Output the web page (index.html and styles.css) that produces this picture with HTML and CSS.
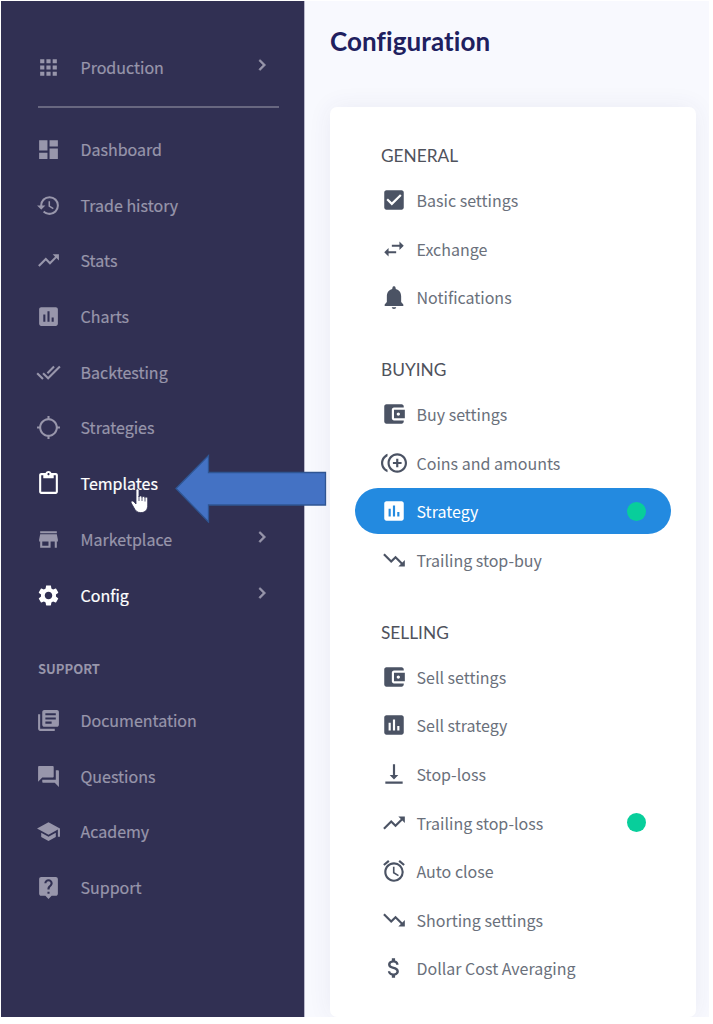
FILE: index.html
```html
<!DOCTYPE html>
<html lang="en">
<head>
<meta charset="utf-8">
<title>Configuration</title>
<link rel="stylesheet" href="styles.css">
</head>
<body>
<svg class="sprite" aria-hidden="true">
  <symbol id="apps" viewBox="0 0 24 24"><path d="M4 8h4V4H4v4zm6 12h4v-4h-4v4zm-6 0h4v-4H4v4zm0-6h4v-4H4v4zm6 0h4v-4h-4v4zm6-10v4h4V4h-4zm-6 4h4V4h-4v4zm6 6h4v-4h-4v4zm0 6h4v-4h-4v4z"/></symbol>
  <symbol id="dashboard" viewBox="0 0 24 24"><path d="M3 13h8V3H3v10zm0 8h8v-6H3v6zm10 0h8V11h-8v10zm0-18v6h8V3h-8z"/></symbol>
  <symbol id="history" viewBox="0 0 24 24"><path d="M13 3a9 9 0 0 0-9 9H1l3.89 3.89.07.14L9 12H6c0-3.87 3.13-7 7-7s7 3.13 7 7-3.13 7-7 7c-1.93 0-3.68-.79-4.94-2.06l-1.42 1.42A8.954 8.954 0 0 0 13 21a9 9 0 0 0 0-18zm-1 5v5l4.28 2.54.72-1.21-3.5-2.08V8H12z"/></symbol>
  <symbol id="up" viewBox="0 0 24 24"><path d="M16 6l2.29 2.29-4.88 4.88-4-4L2 16.59 3.41 18l6-6 4 4 6.3-6.29L22 12V6z"/></symbol>
  <symbol id="down" viewBox="0 0 24 24"><path d="M16 18l2.29-2.29-4.88-4.88-4 4L2 7.41 3.41 6l6 6 4-4 6.3 6.29L22 12v6z"/></symbol>
  <symbol id="chart" viewBox="0 0 24 24"><path d="M19 3H5c-1.1 0-2 .9-2 2v14c0 1.1.9 2 2 2h14c1.1 0 2-.9 2-2V5c0-1.1-.9-2-2-2zM9 17H7v-7h2v7zm4 0h-2V7h2v10zm4 0h-2v-4h2v4z"/></symbol>
  <symbol id="done" viewBox="0 0 24 24"><path d="M18 7l-1.41-1.41-6.34 6.34 1.41 1.41L18 7zm4.24-1.41L11.66 16.17 7.48 12l-1.41 1.41L11.66 19l12-12-1.42-1.41zM.41 13.41L6 19l1.41-1.41L1.83 12 .41 13.41z"/></symbol>
  <symbol id="target" viewBox="0 0 24 24"><path d="M20.94 11c-.46-4.17-3.77-7.48-7.94-7.94V1h-2v2.06C6.83 3.52 3.52 6.83 3.06 11H1v2h2.06c.46 4.17 3.77 7.48 7.94 7.94V23h2v-2.06c4.17-.46 7.48-3.77 7.94-7.94H23v-2h-2.06zM12 19c-3.87 0-7-3.13-7-7s3.13-7 7-7 7 3.13 7 7-3.13 7-7 7z"/></symbol>
  <symbol id="clipboard" viewBox="0 0 24 24"><path d="M19 2h-4.18C14.4.84 13.3 0 12 0S9.6.84 9.18 2H5c-1.1 0-2 .9-2 2v16c0 1.1.9 2 2 2h14c1.1 0 2-.9 2-2V4c0-1.1-.9-2-2-2zm-7 0c.55 0 1 .45 1 1s-.45 1-1 1-1-.45-1-1 .45-1 1-1zm7 18H5V4h2v3h10V4h2v16z"/></symbol>
  <symbol id="store" viewBox="0 0 24 24"><path d="M20 4H4v2h16V4zm1 10v-2l-1-5H4l-1 5v2h1v6h10v-6h4v6h2v-6h1zm-9 4H6v-4h6v4z"/></symbol>
  <symbol id="gear" viewBox="0 0 24 24"><path d="M19.14 12.94c.04-.3.06-.61.06-.94 0-.32-.02-.64-.07-.94l2.03-1.58c.18-.14.23-.41.12-.61l-1.92-3.32c-.12-.22-.37-.29-.59-.22l-2.39.96c-.5-.38-1.03-.7-1.62-.94l-.36-2.54c-.04-.24-.24-.41-.48-.41h-3.84c-.24 0-.43.17-.47.41l-.36 2.54c-.59.24-1.13.57-1.62.94l-2.39-.96c-.22-.08-.47 0-.59.22L2.74 8.87c-.12.21-.08.47.12.61l2.03 1.58c-.05.3-.09.63-.09.94s.02.64.07.94l-2.03 1.58c-.18.14-.23.41-.12.61l1.92 3.32c.12.22.37.29.59.22l2.39-.96c.5.38 1.03.7 1.62.94l.36 2.54c.05.24.24.41.48.41h3.84c.24 0 .44-.17.47-.41l.36-2.54c.59-.24 1.13-.56 1.62-.94l2.39.96c.22.08.47 0 .59-.22l1.92-3.32c.12-.22.07-.47-.12-.61l-2.01-1.58zM12 15.6c-1.98 0-3.6-1.62-3.6-3.6s1.62-3.6 3.6-3.6 3.6 1.62 3.6 3.6-1.62 3.6-3.6 3.6z"/></symbol>
  <symbol id="books" viewBox="0 0 24 24"><path d="M4 6H2v14c0 1.1.9 2 2 2h14v-2H4V6zm16-4H8c-1.1 0-2 .9-2 2v12c0 1.1.9 2 2 2h12c1.1 0 2-.9 2-2V4c0-1.1-.9-2-2-2zm-1 9H9V9h10v2zm-4 4H9v-2h6v2zm4-8H9V5h10v2z"/></symbol>
  <symbol id="chat" viewBox="0 0 24 24"><path d="M21 6h-2v9H6v2c0 .55.45 1 1 1h11l4 4V7c0-.55-.45-1-1-1zm-4 6V3c0-.55-.45-1-1-1H3c-.55 0-1 .45-1 1v14l4-4h10c.55 0 1-.45 1-1z"/></symbol>
  <symbol id="school" viewBox="0 0 24 24"><path d="M5 13.18v4L12 21l7-3.82v-4L12 17l-7-3.82zM12 3L1 9l11 6 9-4.91V17h2V9L12 3z"/></symbol>
  <symbol id="help" viewBox="0 0 24 24"><path d="M19 2H5c-1.11 0-2 .9-2 2v14c0 1.1.89 2 2 2h4l3 3 3-3h4c1.1 0 2-.9 2-2V4c0-1.1-.9-2-2-2zm-6 16h-2v-2h2v2zm2.07-7.75l-.9.92C13.45 11.9 13 12.5 13 14h-2v-.5c0-1.1.45-2.1 1.17-2.83l1.24-1.26c.37-.36.59-.86.59-1.41 0-1.1-.9-2-2-2s-2 .9-2 2H8c0-2.21 1.79-4 4-4s4 1.79 4 4c0 .88-.36 1.68-.93 2.25z"/></symbol>
  <symbol id="checkbox" viewBox="0 0 24 24"><path d="M19 3H5c-1.11 0-2 .9-2 2v14c0 1.1.89 2 2 2h14c1.11 0 2-.9 2-2V5c0-1.1-.89-2-2-2zm-9 14l-5-5 1.41-1.41L10 14.17l7.59-7.59L19 8l-9 9z"/></symbol>
  <symbol id="swap" viewBox="0 0 24 24"><path d="M6.99 11L3 15l3.99 4v-3H14v-2H6.99v-3zM21 9l-3.99-4v3H10v2h7.01v3L21 9z"/></symbol>
  <symbol id="bell" viewBox="0 0 24 24"><path d="M12 23c1.100 0 2-.7 2-1.600h-4c0 .9.9 1.600 2 1.600zM18.600 16.500v-5.300c0-3.300-1.900-6-4.900-6.700l-.4-1.600C13 1.700 11 1.700 10.700 2.900l-.4 1.600c-3 .7-4.900 3.400-4.900 6.700v5.300L3.400 19v1.200h17.200V19z"/></symbol>
  <symbol id="wallet" viewBox="0 0 24 24"><path d="M21 18v1c0 1.1-.9 2-2 2H5c-1.11 0-2-.9-2-2V5c0-1.1.89-2 2-2h14c1.1 0 2 .9 2 2v1h-9c-1.11 0-2 .9-2 2v8c0 1.1.89 2 2 2h9zm-9-2h10V8H12v8zm4-2.5c-.83 0-1.5-.67-1.5-1.5s.67-1.5 1.5-1.5 1.5.67 1.5 1.5-.67 1.5-1.5 1.5z"/></symbol>
  <symbol id="coins" viewBox="0 0 24 24"><path d="M16 8h-2v3h-3v2h3v3h2v-3h3v-2h-3V8zM2 12c0-2.79 1.64-5.2 4.01-6.32V3.52C2.52 4.76 0 8.09 0 12s2.52 7.24 6.01 8.48v-2.16C3.64 17.2 2 14.79 2 12zm13-9c-4.96 0-9 4.04-9 9s4.04 9 9 9 9-4.04 9-9-4.04-9-9-9zm0 16c-3.86 0-7-3.14-7-7s3.14-7 7-7 7 3.14 7 7-3.14 7-7 7z"/></symbol>
  <symbol id="bottom" viewBox="0 0 24 24"><path d="M16 13h-3V3h-2v10H8l4 4 4-4zM4 19v2h16v-2H4z"/></symbol>
  <symbol id="alarm" viewBox="0 0 24 24"><path d="M22 5.72l-4.6-3.86-1.29 1.53 4.6 3.86L22 5.72zM7.88 3.39L6.6 1.86 2 5.71l1.29 1.53 4.59-3.85zM12.5 8H11v6l4.75 2.85.75-1.23-4-2.37V8zM12 4c-4.97 0-9 4.03-9 9s4.02 9 9 9a9 9 0 0 0 0-18zm0 16c-3.87 0-7-3.13-7-7s3.13-7 7-7 7 3.13 7 7-3.13 7-7 7z"/></symbol>
  <symbol id="dollar" viewBox="0 0 24 24"><path d="M11.8 10.9c-2.27-.59-3-1.2-3-2.15 0-1.09 1.01-1.85 2.7-1.85 1.78 0 2.44.85 2.5 2.1h2.21c-.07-1.72-1.12-3.3-3.21-3.81V3h-3v2.16c-1.94.42-3.5 1.68-3.5 3.61 0 2.31 1.91 3.46 4.7 4.13 2.5.6 3 1.48 3 2.41 0 .69-.49 1.79-2.7 1.79-2.06 0-2.87-.92-2.98-2.1h-2.2c.12 2.19 1.76 3.42 3.68 3.83V21h3v-2.15c1.95-.37 3.5-1.5 3.5-3.55 0-2.84-2.43-3.81-4.7-4.4z"/></symbol>
  <symbol id="chevron" viewBox="0 0 24 24"><path d="M10 6L8.59 7.41 13.17 12l-4.58 4.59L10 18l6-6z"/></symbol>
</svg>
<div class="app">
  <nav class="sidebar">
    <a class="nav"><svg class="ico"><use href="#apps"/></svg><span>Production</span><svg class="chev"><use href="#chevron"/></svg></a>
    <hr class="rule">
    <a class="nav"><svg class="ico"><use href="#dashboard"/></svg><span>Dashboard</span></a>
    <a class="nav"><svg class="ico"><use href="#history"/></svg><span>Trade history</span></a>
    <a class="nav"><svg class="ico"><use href="#up"/></svg><span>Stats</span></a>
    <a class="nav"><svg class="ico"><use href="#chart"/></svg><span>Charts</span></a>
    <a class="nav"><svg class="ico"><use href="#done"/></svg><span>Backtesting</span></a>
    <a class="nav"><svg class="ico"><use href="#target"/></svg><span>Strategies</span></a>
    <a class="nav on"><svg class="ico"><use href="#clipboard"/></svg><span>Templates</span></a>
    <a class="nav"><svg class="ico"><use href="#store"/></svg><span>Marketplace</span><svg class="chev"><use href="#chevron"/></svg></a>
    <a class="nav on"><svg class="ico"><use href="#gear"/></svg><span>Config</span><svg class="chev"><use href="#chevron"/></svg></a>
    <h2 class="label">SUPPORT</h2>
    <a class="nav"><svg class="ico"><use href="#books"/></svg><span>Documentation</span></a>
    <a class="nav"><svg class="ico"><use href="#chat"/></svg><span>Questions</span></a>
    <a class="nav"><svg class="ico"><use href="#school"/></svg><span>Academy</span></a>
    <a class="nav"><svg class="ico"><use href="#help"/></svg><span>Support</span></a>
  </nav>
  <main class="main">
    <h1 class="title">Configuration</h1>
    <section class="card">
      <h2 class="group">GENERAL</h2>
      <a class="item"><svg class="ico"><use href="#checkbox"/></svg><span>Basic settings</span></a>
      <a class="item"><svg class="ico"><use href="#swap"/></svg><span>Exchange</span></a>
      <a class="item"><svg class="ico"><use href="#bell"/></svg><span>Notifications</span></a>
      <h2 class="group">BUYING</h2>
      <a class="item"><svg class="ico"><use href="#wallet"/></svg><span>Buy settings</span></a>
      <a class="item"><svg class="ico"><use href="#coins"/></svg><span>Coins and amounts</span></a>
      <a class="item active"><svg class="ico"><use href="#chart"/></svg><span>Strategy</span><i class="dot"></i></a>
      <a class="item"><svg class="ico"><use href="#down"/></svg><span>Trailing stop-buy</span></a>
      <h2 class="group">SELLING</h2>
      <a class="item"><svg class="ico"><use href="#wallet"/></svg><span>Sell settings</span></a>
      <a class="item"><svg class="ico"><use href="#chart"/></svg><span>Sell strategy</span></a>
      <a class="item"><svg class="ico"><use href="#bottom"/></svg><span>Stop-loss</span></a>
      <a class="item"><svg class="ico"><use href="#up"/></svg><span>Trailing stop-loss</span><i class="dot"></i></a>
      <a class="item"><svg class="ico"><use href="#alarm"/></svg><span>Auto close</span></a>
      <a class="item"><svg class="ico"><use href="#down"/></svg><span>Shorting settings</span></a>
      <a class="item"><svg class="ico"><use href="#dollar"/></svg><span>Dollar Cost Averaging</span></a>
    </section>
  </main>
  <svg class="arrow" viewBox="0 0 154 70"><path d="M2 35.5 34.5 2.5V19.5H151.5V52H34.5V69z"/></svg>
  <svg class="cursor" viewBox="0 0 20 26"><path d="M6 2.4C6 .3 9 .3 9 2.4V9c0-1.5 3-1.500 3 .3 0-1.300 2.900-1.200 2.900.6 0-1.200 2.800-1.100 2.800.8V17c0 4.500-2 7.600-7 7.600-3.700 0-5.300-2-7-5.300L1.200 15c-.9-1.800 1.300-2.800 2.600-1.300L6 16z"/><path class="fingers" d="M9 8v5M12 9v4M15 10v3.500"/></svg>
</div>
</body>
</html>
```
FILE: styles.css
```css
* { box-sizing: border-box; }
body {
  margin: 0;
  background: #fff;
  font-family: "Noto Sans CJK SC", "Noto Sans", sans-serif;
}
.sprite { display: none; }
.app {
  position: relative;
  display: flex;
  width: 708px;
  height: 1016px;
  margin: 1px;
  overflow: hidden;
  background: #f8f9fe;
}
.sidebar {
  width: 303px;
  flex: none;
  padding: 38px 26px 0 35px;
  background: #313053;
  box-shadow: 1px 0 0 #b9b9cb;
}
.nav {
  display: flex;
  align-items: center;
  height: 55.700px;
  font-size: 16px;
  color: #9896ab;
  -webkit-text-stroke: .2px currentColor;
}
.nav span { margin-left: 19.500px; flex: 1; white-space: nowrap; }
.nav .ico { width: 25px; height: 25px; margin-top: 1px; fill: currentColor; flex: none; }
.nav.on { color: #fff; }
.chev {
  width: 22px;
  height: 22px;
  margin: -3px 5px 0 0;
  fill: #9896ab;
  stroke: #9896ab;
  stroke-width: .6;
}
.rule {
  margin: 11.500px -1px 13px 2px;
  border: 0;
  height: 2px;
  background: #686780;
}
.label {
  margin: 34.500px 0 11.300px 2px;
  font-size: 13px;
  line-height: 24px;
  font-weight: 700;
  color: #9896ab;
}
.main { flex: 1; padding: 0 13px 0 26px; }
.title {
  margin: 0;
  padding-top: 20px;
  height: 106px;
  font: 700 26px/40px Lato, sans-serif;
  font-variant-ligatures: none;
  letter-spacing: .1px;
  color: #20205f;
}
.card {
  height: 910px;
  padding: 34.400px 25px 0;
  border-radius: 7px;
  background: #fff;
  box-shadow: 0 0 24px rgba(60, 60, 120, .07);
}
.group {
  margin: 0 0 5.800px 26px;
  font: 400 17.300px/30px Lato, sans-serif;
  color: #4f525c;
}
.item + .group { margin-top: 35px; }
.item {
  display: flex;
  align-items: center;
  height: 46px;
  margin-bottom: 2.600px;
  padding: 0 25px 0 26px;
  border-radius: 23px;
  font-size: 16px;
  color: #6a707b;
}
.item .ico { width: 26px; height: 26px; fill: #4b5364; flex: none; }
.item span { flex: 1; margin-left: 9.500px; white-space: nowrap; }
.item.active { background: #238ae0; color: #fff; }
.item.active .ico { fill: #fff; }
.dot { width: 19px; height: 19px; border-radius: 50%; background: #08ce9b; }
.arrow {
  position: absolute;
  left: 173px;
  top: 452px;
  width: 154px;
  height: 70px;
  fill: #4472c4;
  stroke: #2f5592;
  stroke-width: 1.300;
}
.cursor {
  position: absolute;
  left: 129px;
  top: 487px;
  width: 20px;
  height: 26px;
  fill: #fff;
  stroke: #313053;
  stroke-width: .8;
}
.fingers { fill: none; }
```
